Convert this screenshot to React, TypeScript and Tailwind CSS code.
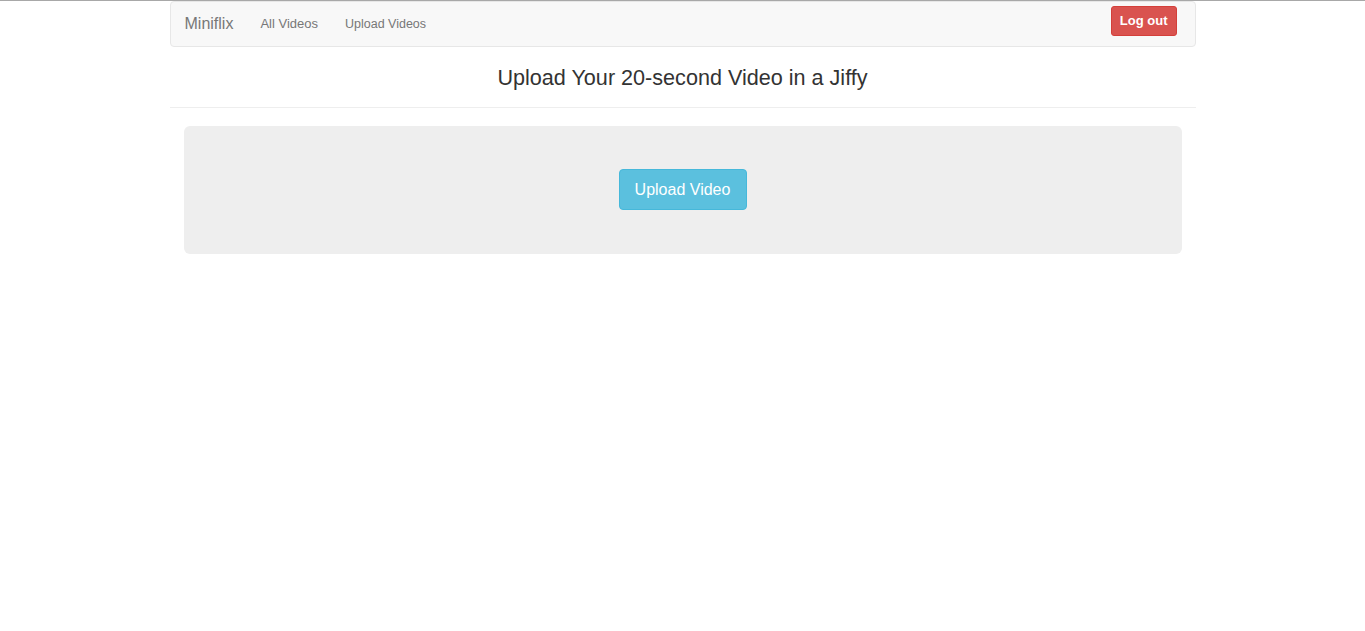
import React from 'react'

export default function App() {
  return (
    <div
      className="min-h-[631px] bg-white border-t border-[#a8a8a8]"
      style={{ fontFamily: '"Liberation Sans", Arial, sans-serif' }}
    >
      <div className="mx-auto w-[1026px]">
        {/* Navbar */}
        <nav className="h-[46px] flex items-center bg-[#f8f8f8] border border-[#e7e7e7] rounded-[4px] pl-[14px] pr-[18px]">
          <span className="text-[16px] text-[#777] mr-[27px]">Miniflix</span>
          <a className="text-[13px] text-[#777] mr-[27px]">All Videos</a>
          <a className="text-[12.5px] text-[#777]">Upload Videos</a>
          <button className="ml-auto self-start mt-[4px] h-[30px] px-[8px] bg-[#d9534f] border border-[#d43f3a] rounded-[3px] text-white text-[13px] font-bold">
            Log out
          </button>
        </nav>

        {/* Heading */}
        <h1 className="mt-[18px] text-center text-[21.6px] leading-[25px] text-[#333]">
          Upload Your 20-second Video in a Jiffy
        </h1>
        <hr className="mt-[17px] border-0 border-t border-[#eee]" />

        {/* Jumbotron */}
        <div className="mx-[14px] mt-[18px] h-[128px] bg-[#eee] rounded-[6px] flex justify-center pt-[43px]">
          <button className="h-[41px] w-[128px] bg-[#5bc0de] border border-[#46b8da] rounded-[4px] text-white text-[16px]">
            Upload Video
          </button>
        </div>
      </div>
    </div>
  )
}
